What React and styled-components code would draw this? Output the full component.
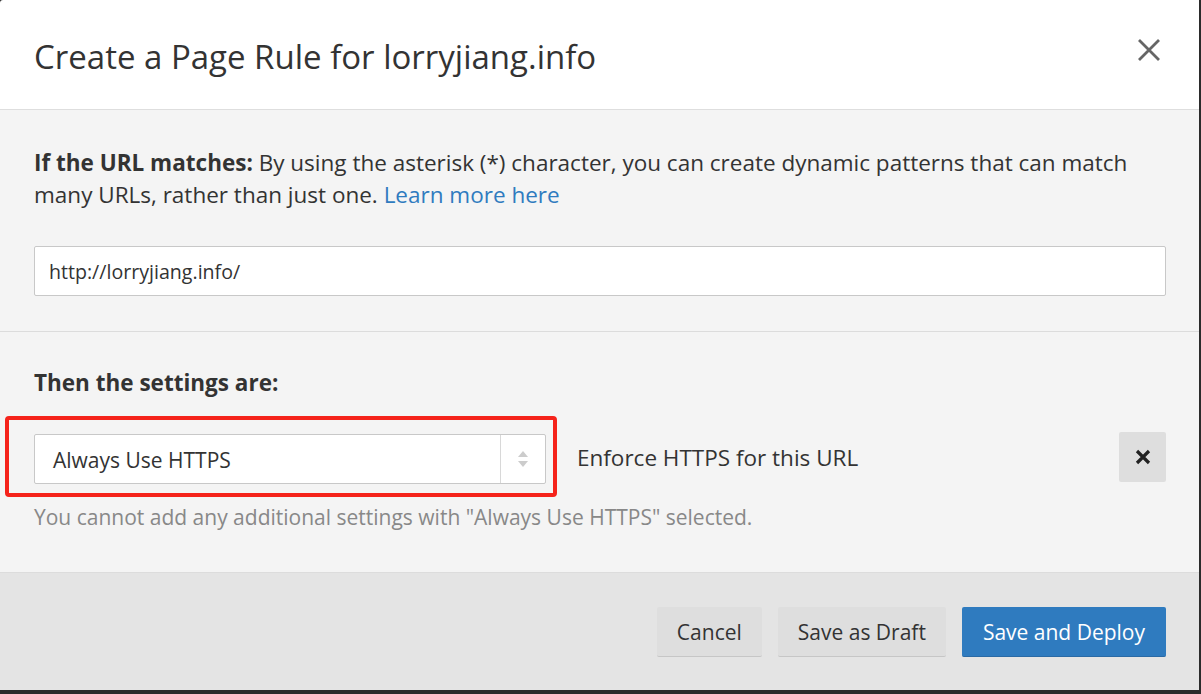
import React from 'react';
import styled, { createGlobalStyle } from 'styled-components';

const GlobalStyle = createGlobalStyle`
    html, body {
        margin: 0;
        padding: 0;
        background: #2b2b2b;
        font-family: "Open Sans", "Noto Sans", sans-serif;
        color: #333;
    }
`;

const Modal = styled.div`
    width: 1199px;
    height: 690px;
    background: #fff;
    display: flex;
    flex-direction: column;
    overflow: hidden;
    border-top-left-radius: 3px;
`;

const Header = styled.div`
    height: 110px;
    flex-shrink: 0;
    box-sizing: border-box;
    border-bottom: 1px solid #dedede;
    display: flex;
    align-items: center;
    justify-content: space-between;
    padding: 0 39px 0 34px;
`;

const Title = styled.h2`
    margin: 0;
    font-size: 33px;
    font-weight: 400;
    color: #333;
    padding-top: 3px;
`;

const CloseButton = styled.button`
    background: none;
    border: none;
    padding: 0;
    width: 22px;
    height: 22px;
    margin-bottom: 10px;
    display: flex;
    align-items: center;
    justify-content: center;
    cursor: pointer;
`;

const Section = styled.div`
    background: #f4f4f4;
    height: ${({ h }) => h}px;
    flex-shrink: 0;
    box-sizing: border-box;
    border-bottom: 1px solid #dcdcdc;
    padding: ${({ pad }) => pad};
`;

const Intro = styled.p`
    margin: 0;
    font-size: 22.5px;
    line-height: 32px;
    color: #333;
    strong { font-weight: 700; }
    a { color: #2f7bbf; text-decoration: none; }
`;

const UrlInput = styled.div`
    margin-top: 35px;
    height: 50px;
    box-sizing: border-box;
    background: #fff;
    border: 1px solid #c8c8c8;
    border-radius: 2px;
    display: flex;
    align-items: center;
    padding-left: 14px;
    font-size: 19.6px;
    color: #333;
`;

const Label = styled.div`
    font-size: 22.5px;
    font-weight: 700;
    line-height: 32px;
    color: #333;
`;

const SettingRow = styled.div`
    margin-top: 17px;
    display: flex;
    align-items: center;
`;

const Highlight = styled.div`
    margin-left: -29px;
    padding: 14px 7px 9px 25px;
    border: 4px solid #f5231b;
    border-radius: 4px;
`;

const Select = styled.div`
    width: 512px;
    height: 50px;
    box-sizing: border-box;
    background: #fff;
    border: 1px solid #c8c8c8;
    border-radius: 2px;
    display: flex;
    align-items: stretch;
    font-size: 21px;
    color: #333;
`;

const SelectValue = styled.div`
    flex: 1;
    display: flex;
    align-items: center;
    padding-left: 18px;
    padding-top: 1px;
`;

const SelectArrows = styled.div`
    width: 44px;
    border-left: 1px solid #d8d8d8;
    display: flex;
    align-items: center;
    justify-content: center;
`;

const Description = styled.div`
    margin-left: 20px;
    margin-top: 2px;
    font-size: 22.5px;
    color: #333;
    flex: 1;
`;

const RemoveButton = styled.button`
    width: 47px;
    height: 50px;
    border: none;
    border-radius: 2px;
    background: #dedede;
    display: flex;
    align-items: center;
    justify-content: center;
    cursor: pointer;
`;

const Hint = styled.div`
    margin-top: 6px;
    font-size: 21px;
    color: #888;
`;

const Footer = styled.div`
    flex: 1;
    background: #e4e4e4;
    display: flex;
    justify-content: flex-end;
    align-items: flex-start;
    gap: 16px;
    padding: 34px 33px 0 0;
`;

const Button = styled.button`
    height: 50px;
    box-sizing: border-box;
    padding: 0 ${({ px }) => px}px;
    border: none;
    border-bottom: 1px solid ${({ primary }) => (primary ? '#2a6aa5' : '#c6c6c6')};
    border-radius: 2px;
    background: ${({ primary }) => (primary ? '#2f7bbf' : '#dedede')};
    color: ${({ primary }) => (primary ? '#fff' : '#333')};
    font-family: "Open Sans", "Noto Sans", sans-serif;
    font-size: 21px;
    cursor: pointer;
`;

const App = () => (
    <>
        <GlobalStyle />
        <Modal>
            <Header>
                <Title>Create a Page Rule for lorryjiang.info</Title>
                <CloseButton>
                    <svg width="22" height="22" viewBox="0 0 22 22">
                        <path d="M1 1L21 21M21 1L1 21" stroke="#666" strokeWidth="2.8" />
                    </svg>
                </CloseButton>
            </Header>
            <Section h={222} pad="37px 33px 0 34px">
                <Intro>
                    <strong>If the URL matches:</strong> By using the asterisk (*) character, you can create dynamic patterns that can match many URLs, rather than just one. <a href="#">Learn more here</a>
                </Intro>
                <UrlInput>http://lorryjiang.info/</UrlInput>
            </Section>
            <Section h={241} pad="35px 33px 0 34px">
                <Label>Then the settings are:</Label>
                <SettingRow>
                    <Highlight>
                        <Select>
                            <SelectValue>Always Use HTTPS</SelectValue>
                            <SelectArrows>
                                <svg width="12" height="20" viewBox="0 0 12 20">
                                    <path d="M6 2L11 8H1Z" fill="#ccc" />
                                    <path d="M6 18L11 12H1Z" fill="#ccc" />
                                </svg>
                            </SelectArrows>
                        </Select>
                    </Highlight>
                    <Description>Enforce HTTPS for this URL</Description>
                    <RemoveButton>
                        <svg width="16" height="16" viewBox="0 0 16 16">
                            <path d="M2 2L14 14M14 2L2 14" stroke="#222" strokeWidth="3.2" />
                        </svg>
                    </RemoveButton>
                </SettingRow>
                <Hint>You cannot add any additional settings with "Always Use HTTPS" selected.</Hint>
            </Section>
            <Footer>
                <Button px={20}>Cancel</Button>
                <Button px={20}>Save as Draft</Button>
                <Button primary px={21}>Save and Deploy</Button>
            </Footer>
        </Modal>
    </>
);

export default App;
